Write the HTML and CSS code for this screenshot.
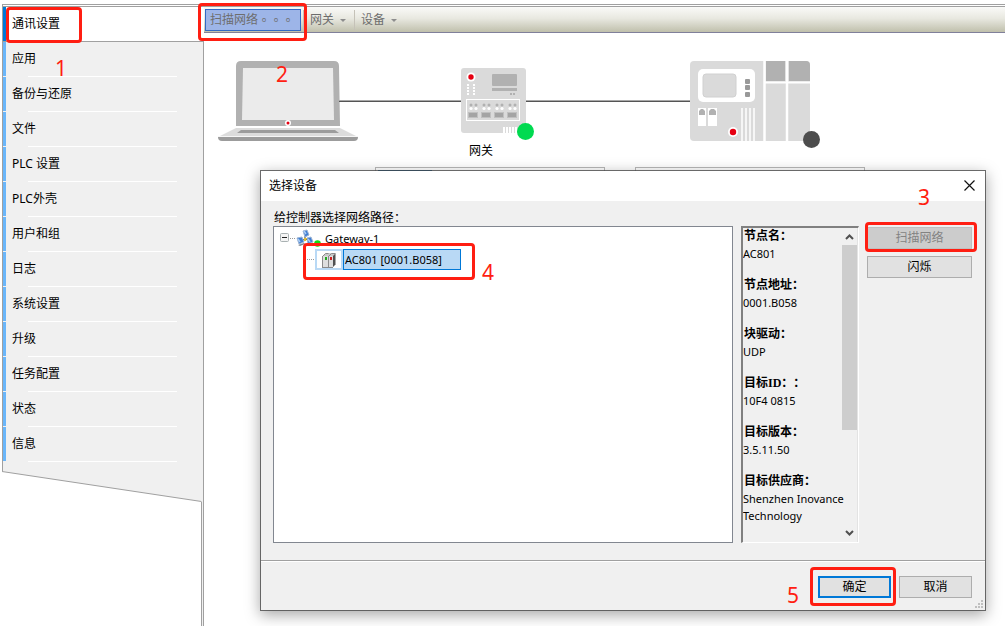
FILE: index.html
```html
<!DOCTYPE html>
<html lang="zh-CN">
<head>
    <meta charset="UTF-8">
    <meta name="viewport" content="width=device-width, initial-scale=1.0">
    <title>通讯设置</title>
    <link rel="stylesheet" href="styles.css">
</head>
<body>
    <div class="app">
        <aside class="sidebar">
            <nav>
                <ul>
                    <li><a href="#" class="active">通讯设置</a></li>
                    <li><a href="#">应用</a></li>
                    <li><a href="#">备份与还原</a></li>
                    <li><a href="#">文件</a></li>
                    <li><a href="#">PLC 设置</a></li>
                    <li><a href="#">PLC外壳</a></li>
                    <li><a href="#">用户和组</a></li>
                    <li><a href="#">日志</a></li>
                    <li><a href="#">系统设置</a></li>
                    <li><a href="#">升级</a></li>
                    <li><a href="#">任务配置</a></li>
                    <li><a href="#">状态</a></li>
                    <li><a href="#">信息</a></li>
                </ul>
            </nav>
            <svg class="sidebar-edge" viewBox="0 0 201 31" preserveAspectRatio="none">
                <path d="M0 0.5L199.5 30.5V31H0z" fill="#fff"/>
                <path d="M0 0.5L199.5 30.5" fill="none" stroke="#a0a0a0"/>
            </svg>
            <div class="sidebar-rest"></div>
        </aside>
        <main>
            <div class="toolbar">
                <button class="tool scan">扫描网络<span class="dots">。。。</span></button>
                <button class="tool">网关<i class="caret"></i></button>
                <button class="tool">设备<i class="caret"></i></button>
            </div>
            <div class="topology">
                <svg class="laptop" width="140" height="80" viewBox="0 0 140 80">
                    <path d="M18 65V5q0-5 5-5h93q5 0 5 5l1 60z" fill="#b1b1b1"/>
                    <path d="M25 7h90l1 52H24z" fill="#ebebeb"/>
                    <circle cx="70" cy="62" r="3" fill="#fff"/>
                    <circle cx="70" cy="62" r="1.5" fill="#e60012"/>
                    <path d="M18 67h104l18 9H0z" fill="#dcdcdc"/>
                    <path d="M23 69h94l4 3H19z" fill="#9c9c9c"/>
                    <path d="M0 76h140q0 4-4 4H4q-4 0-4-4z" fill="#9c9c9c"/>
                    <path d="M0 75.500h140" stroke="#f6f6f6"/>
                </svg>
                <span class="wire from-laptop"></span>
                <svg class="gateway" width="65" height="66" viewBox="0 0 65 66">
                    <rect width="65" height="65" rx="3" fill="#dadada"/>
                    <circle cx="10" cy="9" r="4.500" fill="#fff"/>
                    <circle cx="10" cy="9" r="2.700" fill="#e60012"/>
                    <path d="M7 16v12M13 16v12" stroke="#fff" stroke-width="2" stroke-dasharray="2 1"/>
                    <rect x="31" y="6" width="25" height="12" rx="1" fill="#b1b1b1"/>
                    <path d="M31 21.500h25" stroke="#b1b1b1" stroke-width="3"/>
                    <path d="M49 26h6" stroke="#b1b1b1" stroke-width="2" stroke-dasharray="2 1"/>
                    <rect x="5.500" y="31.500" width="53" height="21" fill="none" stroke="#fff"/>
                    <g fill="#b1b1b1">
                        <circle cx="10" cy="37" r="1.500"/><circle cx="15" cy="37" r="1.500"/>
                        <circle cx="23" cy="37" r="1.500"/><circle cx="28" cy="37" r="1.500"/>
                        <circle cx="36" cy="37" r="1.500"/><circle cx="41" cy="37" r="1.500"/>
                        <circle cx="49" cy="37" r="1.500"/><circle cx="54" cy="37" r="1.500"/>
                    </g>
                    <g fill="#fff">
                        <circle cx="10" cy="40.500" r="1.600"/><circle cx="15" cy="40.500" r="1.600"/>
                        <circle cx="23" cy="40.500" r="1.600"/><circle cx="28" cy="40.500" r="1.600"/>
                        <circle cx="36" cy="40.500" r="1.600"/><circle cx="41" cy="40.500" r="1.600"/>
                        <circle cx="49" cy="40.500" r="1.600"/><circle cx="54" cy="40.500" r="1.600"/>
                    </g>
                    <g fill="#a4a4a4" stroke="#c0c0c0">
                        <rect x="7.500" y="44.500" width="9" height="5"/><rect x="20.500" y="44.500" width="9" height="5"/>
                        <rect x="33.500" y="44.500" width="9" height="5"/><rect x="46.500" y="44.500" width="9" height="5"/>
                    </g>
                    <path d="M42 62h16" stroke="#fff" stroke-width="6" stroke-dasharray="2 1"/>
                    <circle cx="64.500" cy="63.500" r="8.500" fill="#00da50"/>
                </svg>
                <span class="wire"></span>
                <svg class="plc" width="120" height="80" viewBox="0 0 120 80">
                    <rect width="120" height="80" rx="4" fill="#dadada"/>
                    <path d="M76 0h19v20H76zM99 0h17q4 0 4 4v16H99z" fill="#b1b1b1"/>
                    <path d="M74.500 0v80M97 0v80" stroke="#fff" stroke-width="2.500"/>
                    <path d="M75 21.500h45" stroke="#fff" stroke-width="2"/>
                    <rect x="8" y="8" width="57" height="33" rx="5" fill="#fff"/>
                    <rect x="13" y="13" width="33" height="23" rx="3" fill="#dadada" stroke="#d0d0d0"/>
                    <rect x="55" y="18" width="5" height="5" rx="1" fill="#999"/>
                    <rect x="55" y="24" width="5" height="5" rx="1" fill="#999"/>
                    <rect x="55" y="31" width="5" height="5" rx="1" fill="#999"/>
                    <path d="M8 47h8v18H8zM18 47h9v18h-9z" fill="#fff"/>
                    <path d="M9 54v-4l2-2h2l2 2v4zM19 54v-4l2-2h3l2 2v4z" fill="#b1b1b1"/>
                    <path d="M52 47v33M56 47v33M60 47v33M64 47v33" stroke="#fff" stroke-width="1.500"/>
                    <circle cx="43" cy="71" r="5" fill="#fff"/>
                    <circle cx="43" cy="71" r="3.200" fill="#e60012"/>
                    <circle cx="121.500" cy="78.500" r="8.500" fill="#4d4d4d"/>
                </svg>
                <span class="node-label">网关</span>
            </div>
            <div class="panels">
                <div class="panel"><div class="panel-head"></div></div>
                <div class="panel"></div>
            </div>
        </main>
    </div>

    <div class="dialog" role="dialog" aria-labelledby="dialog-title">
        <header class="dialog-title">
            <span id="dialog-title">选择设备</span>
            <button class="close" aria-label="关闭">
                <svg width="11" height="12" viewBox="0 0 11 12"><path d="M0.500 0.500l10 10M10.500 0.500l-10 10" stroke="#111" stroke-width="1.200"/></svg>
            </button>
        </header>
        <div class="dialog-body">
            <p class="caption">给控制器选择网络路径：</p>
            <div class="columns">
                <div class="tree">
                    <div class="tree-row">
                        <svg width="48" height="18" viewBox="0 0 48 18">
                            <rect x="4.500" y="3.500" width="8" height="8" rx="1" fill="#f4f4f4" stroke="#a9b1b2"/>
                            <path d="M6 7.500h5" stroke="#222"/>
                            <path d="M14 8.500h6" stroke="#999" stroke-dasharray="1 1"/>
                            <path d="M29 6v3l-5 2M29 9l6 2" fill="none" stroke="#333"/>
                            <path d="M27 1l4-1 2 5-4 2z" fill="#3f7ed2" stroke="#9cb4d4"/>
                            <path d="M21 8l5-1 2 5-5 2z" fill="#3f7ed2" stroke="#9cb4d4"/>
                            <path d="M31 8l4-1 2 5-5 2z" fill="#3f7ed2" stroke="#9cb4d4"/>
                            <path d="M28 1l2 3M22 9l2 3M32 9l2 3" stroke="#a9ccf5" stroke-width="1.500"/>
                            <path d="M22 15l6-2 1 1-5 2zM32 15l5-2 1 1-4 2z" fill="#7d8490"/>
                            <path d="M28 8h3l-1 3h-2z" fill="#e2bd31"/>
                            <circle cx="41.500" cy="13.500" r="3.300" fill="#12dd12"/>
                        </svg>
                        <span class="tree-name">Gateway-1</span>
                    </div>
                    <div class="tree-row child">
                        <svg class="branch" width="10" height="21" viewBox="0 0 10 21"><path d="M0 10.500h10" stroke="#999" stroke-dasharray="1 1"/></svg>
                        <span class="device-icon">
                            <svg width="14" height="16" viewBox="0 0 14 16">
                                <path d="M1 4l3-3h9v11l-2 3H1z" fill="#c9c9c9"/>
                                <path d="M1 4h5v11H1zM6 4h5v11H6z" fill="#dedede"/>
                                <path d="M0.500 4.500l3-3h3M6.500 4.500l3-3h4M6.500 4v11M0.500 4v11M0 15.500h11" fill="none" stroke="#8a8a8a"/>
                                <path d="M11 4l2.500-2.500v11L11 15z" fill="#505050"/>
                                <path d="M3 5h2v3H3z" fill="#22aa22"/>
                                <path d="M8 5h2v3H8z" fill="#cf2020"/>
                            </svg>
                        </span>
                        <span class="selected">AC801 [0001.B058]</span>
                    </div>
                </div>
                <div class="info">
                    <dl>
                        <dt>节点名：</dt>
                        <dd>AC801</dd>
                        <dt>节点地址：</dt>
                        <dd>0001.B058</dd>
                        <dt>块驱动：</dt>
                        <dd>UDP</dd>
                        <dt>目标ID：：</dt>
                        <dd>10F4 0815</dd>
                        <dt>目标版本：</dt>
                        <dd>3.5.11.50</dd>
                        <dt>目标供应商：</dt>
                        <dd>Shenzhen Inovance Technology</dd>
                    </dl>
                    <div class="scrollbar">
                        <svg width="15" height="17" viewBox="0 0 15 17"><path d="M4 11l3.500-3.500L11 11" fill="none" stroke="#505050" stroke-width="2"/></svg>
                        <div class="track"><div class="thumb"></div></div>
                        <svg width="15" height="17" viewBox="0 0 15 17"><path d="M4 6l3.500 3.500L11 6" fill="none" stroke="#505050" stroke-width="2"/></svg>
                    </div>
                </div>
                <div class="side-buttons">
                    <button class="btn" disabled>扫描网络</button>
                    <button class="btn">闪烁</button>
                </div>
            </div>
        </div>
        <footer class="dialog-footer">
            <button class="btn primary">确定</button>
            <button class="btn">取消</button>
            <svg class="grip" width="9" height="9" viewBox="0 0 9 9"><path d="M6 0h2v2H6zM3 3h2v2H3zM6 3h2v2H6zM0 6h2v2H0zM3 6h2v2H3zM6 6h2v2H6z" fill="#bfbfbf"/></svg>
        </footer>
    </div>

    <!-- step marks -->
    <div class="mark mark-1"></div>
    <div class="mark mark-2"></div>
    <div class="mark mark-3"></div>
    <div class="mark mark-4"></div>
    <div class="mark mark-5"></div>
    <span class="step step-1">1</span>
    <span class="step step-2">2</span>
    <span class="step step-3">3</span>
    <span class="step step-4">4</span>
    <span class="step step-5">5</span>
</body>
</html>
```
FILE: styles.css
```css
* {
    box-sizing: border-box;
}
body {
    margin: 0;
    font-family: 'Noto Sans', 'Noto Sans CJK SC', sans-serif;
    font-size: 12px;
    line-height: 16px;
    text-spacing-trim: space-all;
    background: #fff;
    color: #000;
    overflow: hidden;
}
button {
    font: inherit;
    color: inherit;
    padding: 0;
}
svg {
    display: block;
    overflow: visible;
}
.app {
    display: flex;
    min-height: 100vh;
    padding: 4px 0 0 2px;
}

/* sidebar */
.sidebar {
    display: flex;
    flex-direction: column;
    width: 202px;
    flex-shrink: 0;
    border-top: 1px solid #a0a0a0;
    background: linear-gradient(#a0a0a0, #a0a0a0) 100% 36px / 1px 100% no-repeat, #f0f0f0;
}
.sidebar nav {
    border-left: 1px solid #a0a0a0;
    padding-bottom: 9px;
}
.sidebar ul {
    list-style: none;
    margin: 0;
    padding: 1px 0 0;
    background: #fff;
}
.sidebar li {
    background: linear-gradient(#fff, #fff) 25px 100% / 149px 1px no-repeat, #f0f0f0;
    border-right: 1px solid #a0a0a0;
    height: 35px;
}
.sidebar li:first-child {
    height: 36px;
    background: #fff;
    border-right: none;
    border-top: 1px solid #a0a0a0;
    border-bottom: 1px solid #a0a0a0;
}
.sidebar a {
    display: block;
    height: 34px;
    line-height: 33px;
    padding-left: 6px;
    border-left: 3px solid #6ab6fa;
    color: #000;
    text-decoration: none;
}
.sidebar a.active {
    border-left-color: #0078d7;
}
.sidebar-edge {
    width: 201px;
    height: 31px;
}
.sidebar-rest {
    flex: 1;
    background: #fff;
    margin-right: 2px;
    border-right: 1px solid #a0a0a0;
}

/* toolbar */
main {
    flex: 1;
    min-width: 0;
}
.toolbar {
    display: flex;
    align-items: center;
    height: 29px;
    padding: 3px 0 0 1px;
    border-top: 1px solid #a0a0a0;
    border-bottom: 1px solid #80809a;
    background: linear-gradient(#fff 1px, #a0a0a0 1px, #a0a0a0 2px, #fafaf8 2px, #e8e8e0 50%, #c0c0ac);
}
.tool {
    display: flex;
    align-items: center;
    height: 20px;
    padding: 0 8px 0 6px;
    border: none;
    border-left: 1px solid #c5c2b8;
    background: none;
    color: #6d6d6d;
}
.tool.scan {
    width: 96px;
    height: 22px;
    padding: 0 4px;
    margin-right: 2px;
    border: 1px solid #316ac5;
    background: #9db5e8;
}
.dots {
    font-family: 'Noto Sans CJK TC', sans-serif;
}
.caret {
    margin-left: 6px;
    border: 3px solid transparent;
    border-top-color: #8d8d8d;
    border-bottom-width: 0;
}

/* network view */
.topology {
    display: grid;
    grid-template-columns: 140px 103px 65px 164px 120px;
    grid-template-rows: 80px 20px;
    align-items: center;
    padding: 28px 0 0 14px;
}
.wire {
    height: 2px;
    background: linear-gradient(#a8a8a8 50%, #555 50%);
}
.from-laptop {
    margin-left: -19px;
}
.node-label {
    grid-column: 3;
    padding-left: 8px;
}
.panels {
    display: flex;
    gap: 30px;
    padding: 6px 0 0 171px;
}
.panel {
    width: 230px;
    height: 60px;
    padding: 2px;
    border: 1px solid #b9b9b9;
}
.panel-head {
    width: 54px;
    height: 20px;
    background: #0c6cb4;
}

/* dialog window */
.dialog {
    position: absolute;
    left: 260px;
    top: 170px;
    width: 726px;
    height: 441px;
    display: flex;
    flex-direction: column;
    border: 1px solid rgba(70, 70, 70, 0.78);
    background: #f0f0f0;
    background-clip: padding-box;
    box-shadow: 0 4px 14px rgba(0, 0, 0, 0.35);
}
.dialog-title {
    display: flex;
    align-items: center;
    justify-content: space-between;
    height: 30px;
    padding: 0 10px 0 8px;
    background: #fff;
}
.close {
    border: none;
    background: none;
}
.dialog-body {
    flex: 1;
    display: flex;
    flex-direction: column;
    padding: 9px 13px 17px 12px;
    min-height: 0;
}
.caption {
    margin: 0 0 0 1px;
}
.columns {
    flex: 1;
    display: flex;
    gap: 8px;
    min-height: 0;
}
.tree {
    flex: 1;
    padding: 3px 2px;
    border: 1px solid #828790;
    background: #fff;
}
.tree-row {
    display: flex;
    align-items: center;
    height: 18px;
    font-size: 11px;
}
.tree-name {
    padding-left: 1px;
}
.tree-row.child {
    height: 23px;
    padding-left: 29px;
}
.device-icon {
    display: flex;
    justify-content: center;
    align-items: center;
    width: 28px;
    height: 21px;
    border: 2px solid #b9d9f5;
    background: #fff;
}
.selected {
    width: 118px;
    height: 21px;
    line-height: 19px;
    padding-left: 1px;
    border: 1px solid #0078d7;
    background: #b9d9f5;
}
.info {
    display: flex;
    width: 118px;
    border: 1px solid #fff;
    border-top: 2px solid #808080;
    border-left: 2px solid #808080;
}
.info dl {
    flex: 1;
    min-width: 0;
    margin: 0 -4px 0 0;
    overflow: hidden;
    font-size: 11px;
}
.info dt {
    font-family: 'Liberation Serif', 'Noto Sans CJK SC', serif;
    font-size: 12px;
    font-weight: bold;
    line-height: 17px;
    padding-left: 1px;
    white-space: nowrap;
}
.info dd {
    margin: 0 0 15px;
    line-height: 17px;
}
.scrollbar {
    display: flex;
    flex-direction: column;
    width: 16px;
    border-right: 1px solid #e3e3e3;
}
.track {
    flex: 1;
}
.thumb {
    height: 66%;
    background: #cdcdcd;
}
.side-buttons {
    display: flex;
    flex-direction: column;
    gap: 7px;
    width: 105px;
    padding-top: 1px;
}
.btn {
    height: 22px;
    border: 1px solid #adadad;
    background: #e1e1e1;
}
.btn:disabled {
    background: #ccc;
    border-color: #bfbfbf;
    color: #838383;
}
.btn.primary {
    border: 2px solid #0078d7;
}
.dialog-footer {
    position: relative;
    display: flex;
    justify-content: flex-end;
    gap: 8px;
    height: 50px;
    padding: 15px 13px 0 0;
    border-top: 1px solid #a0a0a0;
    box-shadow: inset 0 1px #fff;
}
.dialog-footer .btn {
    width: 73px;
}
.grip {
    position: absolute;
    right: 1px;
    bottom: 1px;
}

/* step marks */
.mark {
    position: absolute;
    border: 3px solid #ff1e12;
    border-radius: 4px;
}
.mark-1 {
    left: 6px;
    top: 7px;
    width: 76px;
    height: 36px;
}
.mark-2 {
    left: 198px;
    top: 3px;
    width: 109px;
    height: 38px;
}
.mark-3 {
    left: 865px;
    top: 222px;
    width: 112px;
    height: 30px;
}
.mark-4 {
    left: 303px;
    top: 243px;
    width: 172px;
    height: 37px;
}
.mark-5 {
    left: 810px;
    top: 567px;
    width: 86px;
    height: 39px;
}
.step {
    position: absolute;
    font-family: 'Noto Sans', sans-serif;
    font-size: 21px;
    line-height: 24px;
    color: #ff1e12;
}
.step-1 {
    left: 55px;
    top: 56px;
}
.step-2 {
    left: 276px;
    top: 62px;
}
.step-3 {
    left: 918px;
    top: 185px;
}
.step-4 {
    left: 482px;
    top: 260px;
}
.step-5 {
    left: 787px;
    top: 583px;
}
```
